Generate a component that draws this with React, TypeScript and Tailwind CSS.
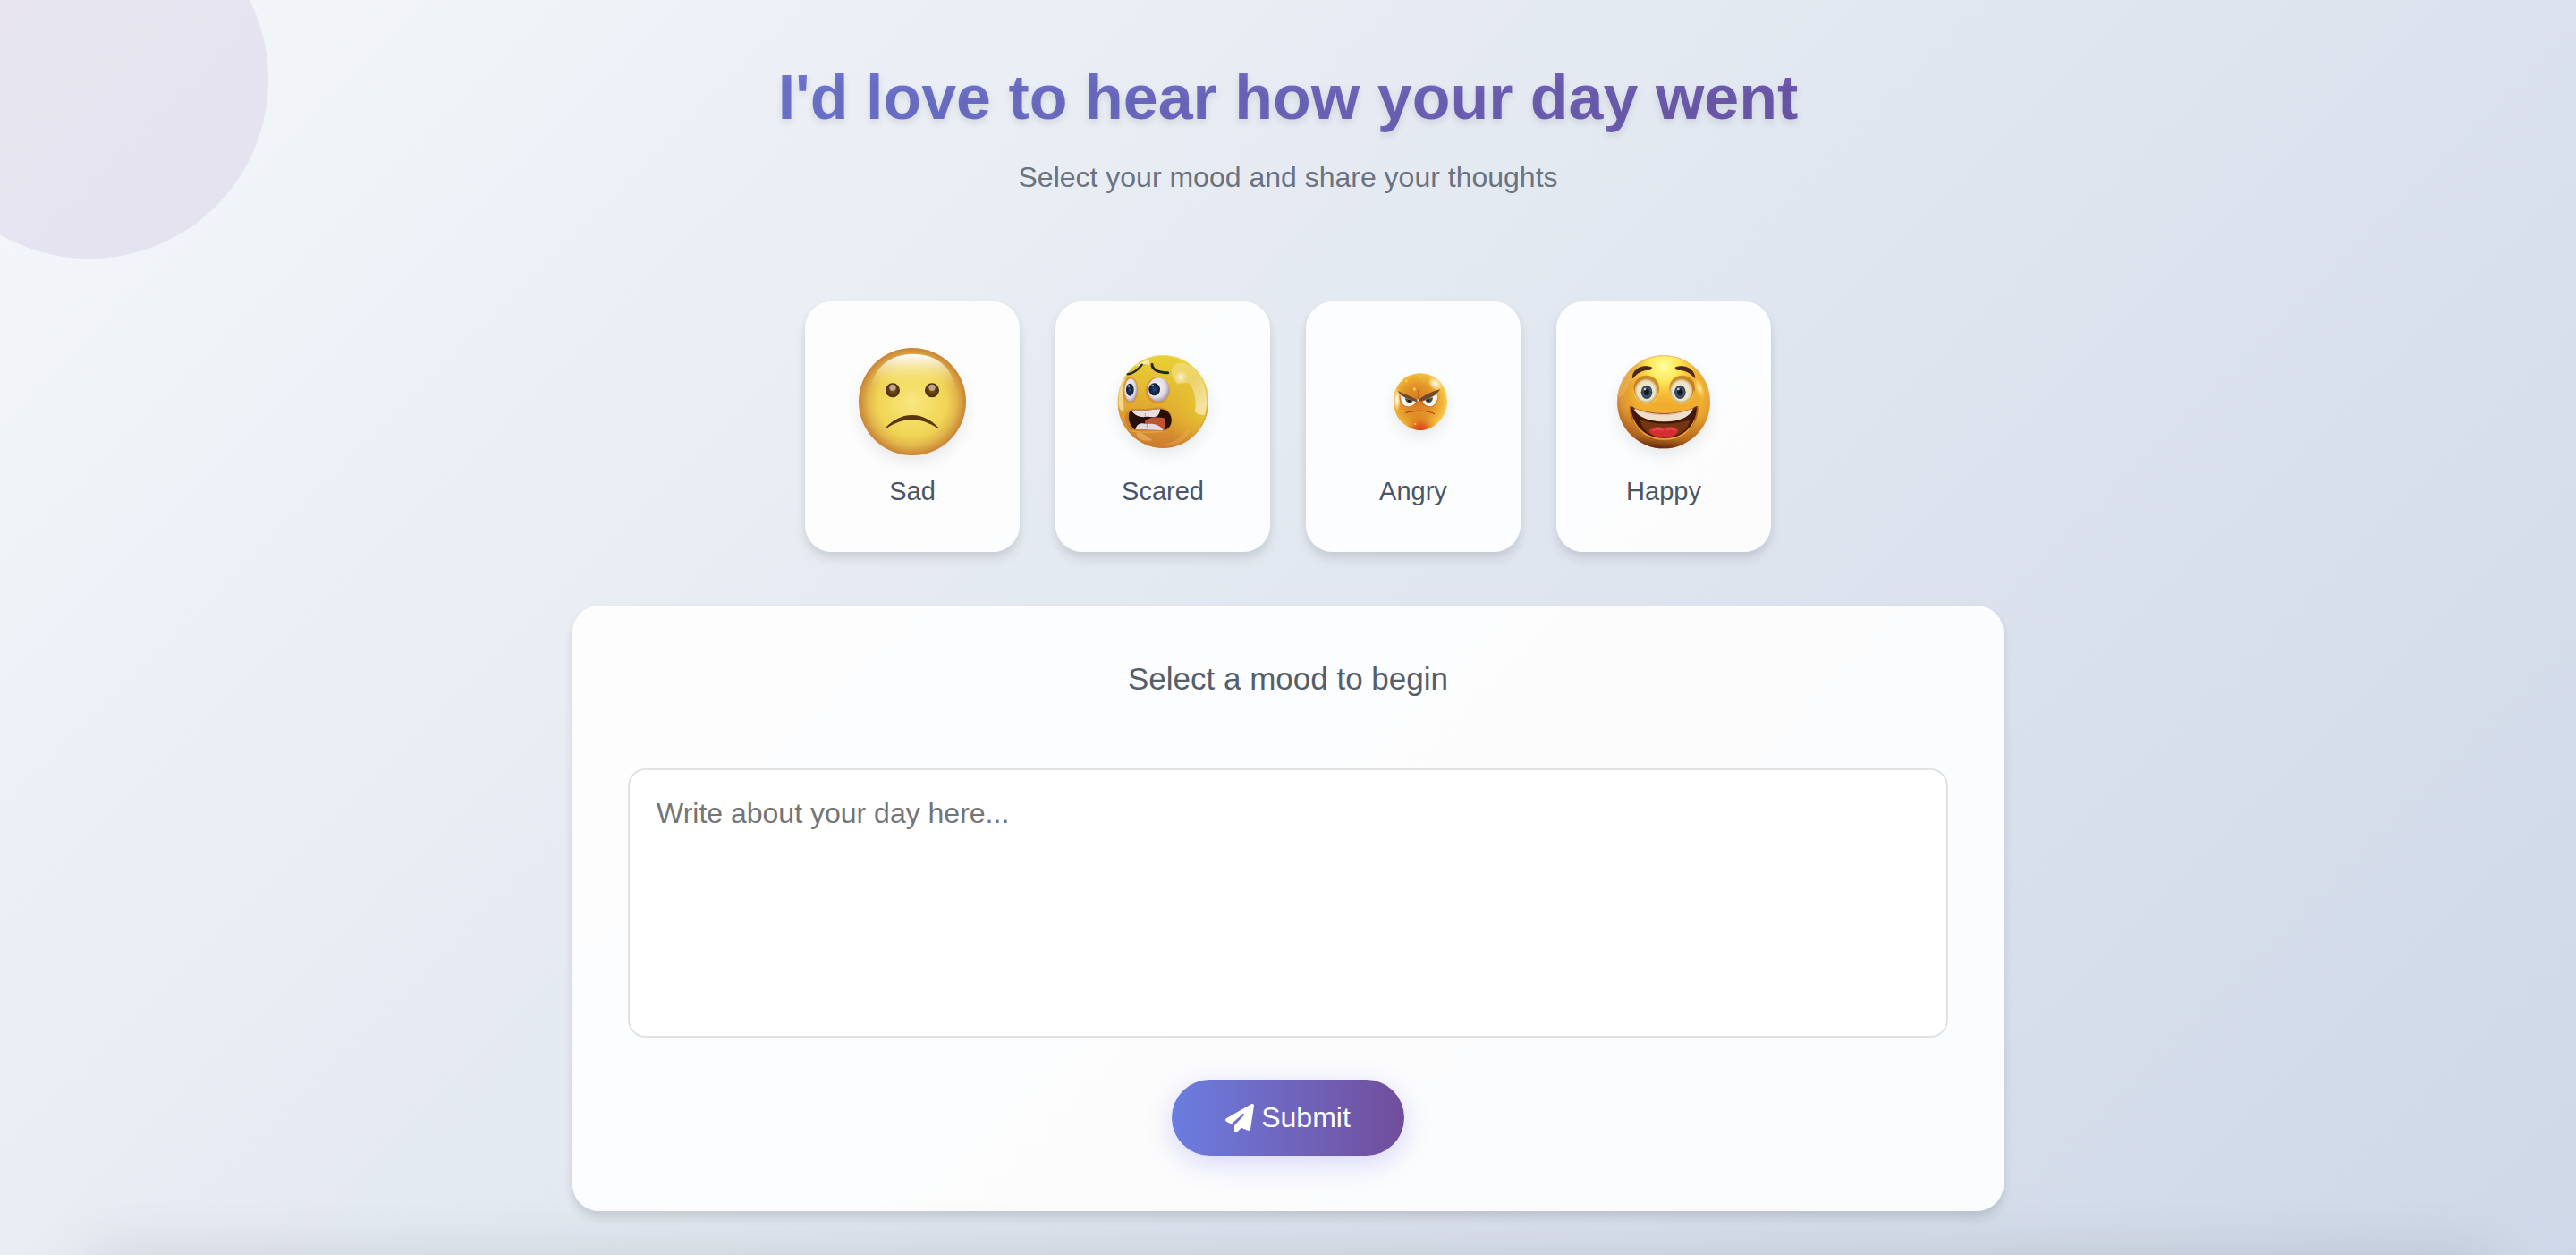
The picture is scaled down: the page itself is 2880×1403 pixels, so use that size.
import { useState } from "react";
import { FaPaperPlane } from "react-icons/fa6";

const SadFace = () => (
  <svg viewBox="240 207 360 360" className="size-[120px]" aria-hidden="true">
    <defs>
      <radialGradient id="sad-base">
        <stop offset="0" stopColor="#f8e684" />
        <stop offset="0.35" stopColor="#f4de66" />
        <stop offset="0.65" stopColor="#f0d455" />
        <stop offset="0.82" stopColor="#e2b84c" />
        <stop offset="1" stopColor="#c98335" />
      </radialGradient>
      <linearGradient id="sad-shine" x1="0" y1="0" x2="0" y2="1">
        <stop offset="0" stopColor="#fff" />
        <stop offset="0.2" stopColor="#fdf8e4" stopOpacity="0.85" />
        <stop offset="0.6" stopColor="#f8eaa0" stopOpacity="0.5" />
        <stop offset="1" stopColor="#f4de66" stopOpacity="0" />
      </linearGradient>
      <radialGradient id="sad-eye">
        <stop offset="0" stopColor="#835018" />
        <stop offset="1" stopColor="#4a2d0c" />
      </radialGradient>
    </defs>
    <circle cx="420" cy="387" r="180" fill="url(#sad-base)" />
    <path d="M284 340C290 270 350 227 423 227s132 43 139 113c-40 0-238 0-278 0z" fill="url(#sad-shine)" />
    <circle cx="354" cy="349" r="24" fill="url(#sad-eye)" />
    <circle cx="486" cy="349" r="24" fill="url(#sad-eye)" />
    <circle cx="354" cy="340" r="11" fill="#bfa58a" />
    <circle cx="486" cy="340" r="11" fill="#bfa58a" />
    <path d="M330 474c28-28 58-42 89-42s61 14 89 42l-3 3c-29-20-56-29-86-29s-56 9-86 29z" fill="#5a3510" />
  </svg>
);

const ScaredFace = () => (
  <svg viewBox="240 207 360 360" className="size-[120px]" aria-hidden="true">
    <defs>
      <linearGradient id="scared-base" x1="0.6" y1="0" x2="0.45" y2="1">
        <stop offset="0" stopColor="#e8d232" />
        <stop offset="0.35" stopColor="#e4bd33" />
        <stop offset="0.65" stopColor="#dea52f" />
        <stop offset="0.85" stopColor="#d48a30" />
        <stop offset="1" stopColor="#cb7a2c" />
      </linearGradient>
      <radialGradient id="scared-side" cx="0.98" cy="0.55" r="0.5">
        <stop offset="0" stopColor="#e9cb38" />
        <stop offset="1" stopColor="#e3b82f" stopOpacity="0" />
      </radialGradient>
      <radialGradient id="scared-eye" cx="0.4" cy="0.4" r="0.6">
        <stop offset="0" stopColor="#f6f3f6" />
        <stop offset="0.7" stopColor="#e2dce6" />
        <stop offset="1" stopColor="#ad9fae" />
      </radialGradient>
      <radialGradient id="scared-iris">
        <stop offset="0" stopColor="#255090" />
        <stop offset="0.5" stopColor="#172b4a" />
        <stop offset="1" stopColor="#101b29" />
      </radialGradient>
      <radialGradient id="scared-spot">
        <stop offset="0" stopColor="#fffbe6" />
        <stop offset="1" stopColor="#f5e29a" stopOpacity="0" />
      </radialGradient>
      <linearGradient id="scared-gloss" x1="0" y1="0" x2="0.6" y2="1">
        <stop offset="0" stopColor="#f1df78" />
        <stop offset="0.5" stopColor="#efd880" />
        <stop offset="1" stopColor="#f8ecc0" />
      </linearGradient>
      <clipPath id="scared-mouth">
        <path d="M310 420c10-8 30-3 52-4 24-1 42-8 62-2 17 6 26 20 25 38-2 20-14 31-34 31-30-1-62-1-90-3-16-14-26-42-15-60z" />
      </clipPath>
    </defs>
    <ellipse cx="421" cy="387" rx="152" ry="156" fill="url(#scared-base)" />
    <ellipse cx="421" cy="387" rx="152" ry="156" fill="url(#scared-side)" />
    <path d="M272 380c2-30 8-52 20-72l8 12c-12 18-18 44-14 70 4 12 6 22 0 30-6-2-10-6-11-12-3-10-4-19-3-28z" fill="#f7e6b4" opacity="0.75" />
    <path d="M326 268c14-10 30-18 48-22l2 18c-10-5-24-4-34 2z" fill="#fdf5da" opacity="0.7" />
    <path d="M450 292c-2-20 8-34 26-35 28-2 56 18 73 50 18 34 24 78 12 124-12 2-24-1-33-10 4-24 2-52-7-74-4-10-8-16-13-22-14-2-26 0-38 4-12-12-19-24-20-37z" fill="url(#scared-gloss)" opacity="0.75" />
    <circle cx="481" cy="305" r="24" fill="url(#scared-spot)" />
    <path d="M330 494c12-10 34 6 56 23-22 4-48 0-56-23z" fill="#ebbb72" opacity="0.6" />
    <path d="M400 532c44 0 78-20 98-50 8-8 14-6 12 4-12 34-56 58-110 46z" fill="#edb567" opacity="0.3" />
    <path d="M272 410c8 72 70 131 149 131s142-60 150-140" fill="none" stroke="#c9802c" strokeWidth="3" opacity="0.5" />
    <path d="M271 370c6-76 70-137 150-137s144 58 150 134" fill="none" stroke="#f4dd8e" strokeWidth="3" opacity="0.7" />
    <ellipse cx="311" cy="348" rx="26" ry="44" fill="#d68a2c" opacity="0.8" />
    <ellipse cx="403" cy="349" rx="41" ry="44" fill="#d28028" opacity="0.6" />
    <ellipse cx="313" cy="349" rx="21" ry="39" fill="url(#scared-eye)" />
    <ellipse cx="406" cy="347" rx="36" ry="40" fill="url(#scared-eye)" />
    <ellipse cx="310" cy="347" rx="13" ry="21" fill="url(#scared-iris)" />
    <ellipse cx="392" cy="346" rx="19" ry="21" fill="url(#scared-iris)" />
    <circle cx="306" cy="335" r="4" fill="#8b9dac" />
    <circle cx="386" cy="333" r="4" fill="#8b9dac" />
    <path d="M302 295c18-2 34-14 48-32" fill="none" stroke="#1e2a34" strokeWidth="7" strokeLinecap="round" />
    <path d="M384 262c0 14 14 28 53 28" fill="none" stroke="#1e2a34" strokeWidth="9" strokeLinecap="round" />
    <path d="M300 420c12-14 36-9 60-9 26-2 46-9 68-1 18 8 26 26 23 44-4 22-18 32-40 31-34-1-68-1-98-3-16-16-26-44-13-62z" fill="#c8742a" opacity="0.6" />
    <g clipPath="url(#scared-mouth)">
      <path d="M296 400h160v90H296z" fill="#2a0e0b" />
      <path d="M360 452c10-12 40-16 64-10 8 12 6 30 0 42h-60z" fill="#c0532f" />
      <path d="M312 412c30 2 72-2 100-2-2 14-6 26-18 28-12 2-22-2-32 0-16 2-38-2-50-26z" fill="#e9dfe1" />
      <path d="M328 484c2-22 18-28 38-22 24-4 48 4 56 22z" fill="#e2dadf" />
      <path d="M361 438v-12M367 462v12" stroke="#9b7e80" strokeWidth="2" />
    </g>
    <path d="M310 484c34 10 68 4 108 4" fill="none" stroke="#e8a83c" strokeWidth="4" strokeLinecap="round" />
  </svg>
);

const AngryFace = () => (
  <svg viewBox="240 207 360 360" className="size-[120px]" aria-hidden="true">
    <defs>
      <radialGradient id="angry-base" cx="0.44" cy="0.5" r="0.58">
        <stop offset="0" stopColor="#d67a20" />
        <stop offset="0.5" stopColor="#e19328" />
        <stop offset="0.8" stopColor="#f0b636" />
        <stop offset="1" stopColor="#f9d75e" />
      </radialGradient>
      <radialGradient id="angry-chin" cx="0.5" cy="1.04" r="0.34">
        <stop offset="0" stopColor="#cf2a12" />
        <stop offset="0.4" stopColor="#dd4a17" stopOpacity="0.8" />
        <stop offset="1" stopColor="#e08c20" stopOpacity="0" />
      </radialGradient>
      <radialGradient id="angry-shine">
        <stop offset="0" stopColor="#fffef6" />
        <stop offset="0.5" stopColor="#fdf2c8" stopOpacity="0.7" />
        <stop offset="1" stopColor="#fbe6a0" stopOpacity="0" />
      </radialGradient>
    </defs>
    <path d="M444 292c54 0 90 42 90 94 0 50-34 84-70 94-12 4-28 4-40 0-38-12-70-44-70-94 0-52 36-94 90-94z" fill="url(#angry-base)" />
    <path d="M444 292c54 0 90 42 90 94 0 50-34 84-70 94-12 4-28 4-40 0-38-12-70-44-70-94 0-52 36-94 90-94z" fill="url(#angry-chin)" />
    <ellipse cx="494" cy="327" rx="28" ry="20" transform="rotate(42 494 327)" fill="url(#angry-shine)" />
    <ellipse cx="366" cy="380" rx="12" ry="40" fill="url(#angry-shine)" />
    <path d="M374 366c16 0 40 12 60 18-4 18-24 22-38 20-14-2-24-18-22-38zM504 363c-18 4-40 14-60 22 6 16 22 22 36 20 16-4 26-20 24-42z" fill="#d5671b" opacity="0.8" />
    <path d="M377 366c12 2 34 14 52 20-4 14-20 18-32 16-12-2-20-18-20-36zM502 364c-14 4-34 14-50 22 4 12 18 18 30 16 13-4 21-20 20-38z" fill="#f1f3ef" />
    <path d="M392 375l26 9c0 4-4 7-9 7-9 0-16-7-17-16zM460 381l25-9c2 9-4 18-12 19-6 0-11-4-13-10z" fill="#4d4b3d" />
    <circle cx="406" cy="384" r="4" fill="#181512" />
    <circle cx="470" cy="382" r="4" fill="#181512" />
    <circle cx="390" cy="383" r="4" fill="#fff" />
    <path d="M367 350c20 10 44 18 66 30 2 4-2 7-6 6-24-6-44-14-60-36zM511 346c-26 6-50 18-70 32-4 4-2 8 4 7 26-6 50-18 66-39z" fill="#6e4a2c" />
    <path d="M437 348q3 18 0 30" fill="none" stroke="#b4501b" strokeWidth="3" />
    <circle cx="436" cy="382" r="3" fill="#f9e6c8" />
    <path d="M396 424c28-8 70-10 95 4" fill="none" stroke="#b5301a" strokeWidth="3" strokeLinecap="round" />
    <path d="M404 428c24-4 58-5 80 1" fill="none" stroke="#e8993a" strokeWidth="2" opacity="0.7" />
    <g fill="#ffd23a">
      <circle cx="397" cy="318" r="4" />
      <circle cx="424" cy="345" r="5" />
      <circle cx="445" cy="308" r="2" />
      <circle cx="456" cy="316" r="2" />
      <circle cx="380" cy="334" r="2" />
      <circle cx="413" cy="332" r="2" />
      <circle cx="427" cy="462" r="3" />
      <circle cx="412" cy="436" r="2" />
      <circle cx="384" cy="418" r="3" />
    </g>
  </svg>
);

const HappyFace = () => (
  <svg viewBox="240 207 360 360" className="size-[120px]" aria-hidden="true">
    <defs>
      <radialGradient id="happy-base" cx="0.56" cy="0.4" r="0.62">
        <stop offset="0" stopColor="#f2ab2c" />
        <stop offset="0.6" stopColor="#efae30" />
        <stop offset="0.85" stopColor="#dc9430" />
        <stop offset="1" stopColor="#bd6c24" />
      </radialGradient>
      <linearGradient id="happy-shade" x1="0.55" y1="0" x2="0.45" y2="1">
        <stop offset="0.6" stopColor="#b9641c" stopOpacity="0" />
        <stop offset="0.88" stopColor="#a5581a" stopOpacity="0.7" />
        <stop offset="1" stopColor="#5e260c" />
      </linearGradient>
      <radialGradient id="happy-top" cx="0.5" cy="0.12" r="0.42">
        <stop offset="0" stopColor="#ffff9c" />
        <stop offset="0.4" stopColor="#ffee5c" stopOpacity="0.9" />
        <stop offset="1" stopColor="#f8c030" stopOpacity="0" />
      </radialGradient>
      <radialGradient id="happy-glow">
        <stop offset="0" stopColor="#fff6b8" />
        <stop offset="1" stopColor="#fbd04a" stopOpacity="0" />
      </radialGradient>
      <radialGradient id="happy-eye" cx="0.5" cy="0.5" r="0.52">
        <stop offset="0" stopColor="#f8f1d8" />
        <stop offset="0.75" stopColor="#eee2bf" />
        <stop offset="1" stopColor="#c0a468" />
      </radialGradient>
      <radialGradient id="happy-iris">
        <stop offset="0" stopColor="#1c0d0c" />
        <stop offset="0.45" stopColor="#2a2020" />
        <stop offset="0.6" stopColor="#3c5676" />
        <stop offset="1" stopColor="#28405e" />
      </radialGradient>
      <clipPath id="happy-mouth">
        <path d="M310 405c70 30 150 30 221 0-2 62-44 104-108 104s-108-42-113-104z" />
      </clipPath>
    </defs>
    <circle cx="420" cy="388" r="156" fill="url(#happy-base)" />
    <circle cx="420" cy="388" r="156" fill="url(#happy-shade)" />
    <circle cx="420" cy="388" r="156" fill="url(#happy-top)" />
    <ellipse cx="540" cy="342" rx="16" ry="38" transform="rotate(-20 540 342)" fill="url(#happy-glow)" />
    <ellipse cx="289" cy="330" rx="13" ry="46" transform="rotate(24 289 330)" fill="#edbd72" opacity="0.4" />
    <path d="M265 388C265 302 334 233 420 233s154 69 154 155" fill="none" stroke="#e8b07c" strokeWidth="3" opacity="0.8" />
    <circle cx="362" cy="342" r="43" fill="#bb721c" opacity="0.75" />
    <circle cx="482" cy="342" r="43" fill="#bb721c" opacity="0.75" />
    <path d="M319 350c2 26 18 44 42 44s38-14 40-34M441 360c4 20 18 34 40 34s38-18 41-42" fill="none" stroke="#f8ce50" strokeWidth="3" strokeLinecap="round" opacity="0.8" />
    <ellipse cx="361" cy="351" rx="38" ry="40" fill="url(#happy-eye)" />
    <ellipse cx="479" cy="351" rx="38" ry="40" fill="url(#happy-eye)" />
    <ellipse cx="363" cy="355" rx="19" ry="23" fill="url(#happy-iris)" />
    <ellipse cx="475" cy="355" rx="19" ry="23" fill="url(#happy-iris)" />
    <circle cx="357" cy="345" r="4" fill="#cdd5dc" />
    <circle cx="469" cy="345" r="4" fill="#cdd5dc" />
    <g fill="#4a291c" stroke="#4a291c" strokeWidth="3" strokeLinejoin="round">
      <path d="M316 309c-2-28 28-48 63-37 1 4-2 8-7 8-24 0-40 9-56 29z" />
      <path d="M524 307c0-26-30-46-64-35-1 4 1 8 6 8 24 0 42 8 58 27z" />
    </g>
    <path d="M305 402c78 32 152 32 231 0 2 66-46 110-115 110s-114-42-116-110z" fill="#b0601c" />
    <path d="M318 446c16 42 54 67 104 67s86-24 100-64" fill="none" stroke="#eaa636" strokeWidth="4" strokeLinecap="round" />
    <g clipPath="url(#happy-mouth)">
      <path d="M300 396h240v120H300z" fill="#451709" />
      <path d="M340 446c50 20 120 20 170 0-10 40-40 59-88 59s-72-19-82-59z" fill="#733611" />
      <path d="M316 406c68 32 138 30 205-1-8 30-42 49-100 49s-94-20-105-48z" fill="#efdfcb" />
      <path d="M316 406c68 26 138 26 205-1-50 36-150 38-205 1z" fill="#d2b299" opacity="0.7" />
      <path d="M371 486c4-14 34-18 50-10 16-8 46-4 48 10-6 14-24 22-48 22s-42-8-50-22z" fill="#d62d35" />
      <path d="M384 484c10-6 24-5 34-1M430 482c10-4 22-4 30 2" fill="none" stroke="#e8505a" strokeWidth="4" strokeLinecap="round" />
    </g>
    <path d="M310 404q8 2 12 8M531 404q-8 2-12 8" fill="none" stroke="#6d2c0c" strokeWidth="4" strokeLinecap="round" />
  </svg>
);

const moods = [
  { face: SadFace, label: "Sad" },
  { face: ScaredFace, label: "Scared" },
  { face: AngryFace, label: "Angry" },
  { face: HappyFace, label: "Happy" },
];

const App = () => {
  const [mood, setMood] = useState("");
  const [entry, setEntry] = useState("");

  return (
    <div className="relative min-h-screen overflow-hidden bg-[#c3cfe2] bg-[linear-gradient(135deg,#f5f7fa_0%,#c3cfe2_100%)] bg-[length:100%_2600px] bg-no-repeat px-10 pt-16 pb-12 font-['Liberation_Sans',Arial,sans-serif]">
      <div className="absolute -top-[111px] -left-25 size-100 rounded-full bg-[#764ba2]/10" />

      <main className="relative mx-auto flex max-w-[1600px] flex-col">
        <header className="text-center">
          <h1 className="bg-linear-to-r from-[#6d7edc] to-[#7054a8] bg-clip-text text-[70px] leading-[90px] font-bold text-transparent text-shadow-[0_4px_8px_rgba(0,0,0,0.1)]">
            I'd love to hear how your day went
          </h1>
          <p className="mt-5 text-[32px] leading-[48px] text-[#6b7280]">Select your mood and share your thoughts</p>
        </header>

        <div className="mt-[115px] flex flex-wrap justify-center gap-10">
          {moods.map((item) => {
            const Face = item.face;
            return (
              <button
                key={item.label}
                type="button"
                aria-pressed={mood === item.label}
                onClick={() => setMood(item.label)}
                className="flex h-[280px] w-60 cursor-pointer flex-col items-center gap-5 rounded-[30px] bg-white/90 pt-[52px] shadow-[0_8px_12px_rgba(0,0,0,0.1),0_2px_8px_rgba(0,0,0,0.03)]"
              >
                <span className="drop-shadow-[0_8px_8px_rgba(0,0,0,0.08)]">
                  <Face />
                </span>
                <span className="text-[29px] leading-[40px] text-[#4a5568]">{item.label}</span>
              </button>
            );
          })}
        </div>

        <section className="mt-15 flex flex-col items-center rounded-[30px] bg-white/90 p-[62px] shadow-[0_8px_12px_rgba(0,0,0,0.1),0_2px_8px_rgba(0,0,0,0.03)]">
          <label htmlFor="entry" className="text-[35px] leading-[40px] text-[#555e6b]">
            {mood ? `You are feeling ${mood.toLowerCase()}` : "Select a mood to begin"}
          </label>
          <textarea
            id="entry"
            value={entry}
            onChange={(e) => setEntry(e.target.value)}
            placeholder="Write about your day here..."
            className="mt-20 h-[301px] w-full resize-none rounded-[20px] border-2 border-[#e2e2e2] bg-white/90 p-[30px] text-[32px] leading-[36px] text-[#4a5568] outline-none placeholder:text-[#757575]"
          />
          <button
            type="button"
            className="mt-[47px] flex cursor-pointer items-center gap-2 rounded-full bg-linear-to-r from-[#6a7de0] to-[#704d9c] px-[60px] py-5 text-[32px] leading-[45px] text-white shadow-[0_8px_30px_rgba(99,102,241,0.25)]"
          >
            <FaPaperPlane className="size-8" />
            Submit
          </button>
        </section>
      </main>

      {/* soft shade along the bottom edge */}
      <div className="absolute inset-x-25 -bottom-21 h-20 shadow-[0_0_70px_rgba(0,0,0,0.12)]" />
    </div>
  );
};

export default App;
